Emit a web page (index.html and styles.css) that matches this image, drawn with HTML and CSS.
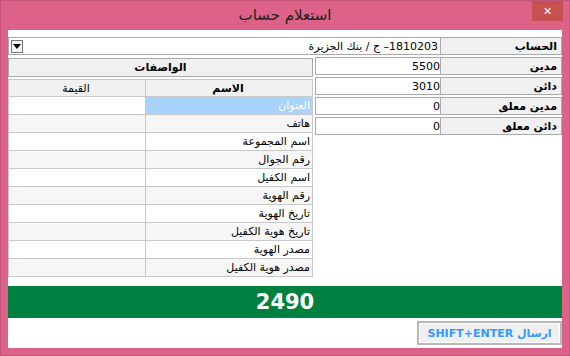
FILE: index.html
```html
<!DOCTYPE html>
<html lang="ar">
<head>
<meta charset="UTF-8">
<title>استعلام حساب</title>
<link rel="stylesheet" href="styles.css">
</head>
<body>
<div class="window">
	<div class="titlebar">
		<div class="title">استعلام حساب</div>
		<div class="close">&#x2715;</div>
	</div>
	<div class="client" dir="rtl">
		<div class="top-row">
			<div class="label">الحساب</div>
			<div class="combo">
				<span class="combo-text">1810203– ج / بنك الجزيرة</span>
				<span class="drop"><svg width="8" height="5" viewBox="0 0 8 5"><path d="M0 0h8L4 5z" fill="#000"/></svg></span>
			</div>
		</div>
		<div class="mid">
			<div class="fields">
				<div class="field"><div class="label">مدين</div><div class="value">5500</div></div>
				<div class="field"><div class="label">دائن</div><div class="value">3010</div></div>
				<div class="field"><div class="label">مدين معلق</div><div class="value">0</div></div>
				<div class="field"><div class="label">دائن معلق</div><div class="value">0</div></div>
			</div>
			<div class="specs">
				<div class="specs-head">الواصفات</div>
				<table class="grid">
					<tr><th class="name-col">الاسم</th><th class="val-col">القيمة</th></tr>
					<tr class="sel"><td class="name">العنوان</td><td></td></tr>
					<tr class="alt"><td class="name">هاتف</td><td></td></tr>
					<tr><td class="name">اسم المجموعة</td><td></td></tr>
					<tr class="alt"><td class="name">رقم الجوال</td><td></td></tr>
					<tr><td class="name">اسم الكفيل</td><td></td></tr>
					<tr class="alt"><td class="name">رقم الهوية</td><td></td></tr>
					<tr><td class="name">تاريخ الهوية</td><td></td></tr>
					<tr class="alt"><td class="name">تاريخ هوية الكفيل</td><td></td></tr>
					<tr><td class="name">مصدر الهوية</td><td></td></tr>
					<tr class="alt"><td class="name">مصدر هوية الكفيل</td><td></td></tr>
				</table>
			</div>
		</div>
		<div class="balance">2490</div>
		<div class="footer">
			<div class="send">ارسال SHIFT+ENTER</div>
		</div>
	</div>
</div>
</body>
</html>
```
FILE: styles.css
```css
* {
	margin: 0;
	padding: 0;
	box-sizing: border-box;
}
body {
	font-family: "DejaVu Sans", "Noto Sans", sans-serif;
	font-size: 11px;
	color: #000;
	background: #dc6288;
}
.window {
	width: 570px;
	height: 356px;
	background: #dc6288;
	border: 1px solid #c4557a;
	display: flex;
	flex-direction: column;
}
.titlebar {
	height: 29px;
	position: relative;
	display: flex;
	justify-content: center;
	align-items: center;
}
.title {
	font-size: 15px;
	color: #222;
	padding-bottom: 1px;
}
.close {
	position: absolute;
	right: 6px;
	top: 0;
	width: 31px;
	height: 20px;
	background: #c75050;
	color: #fff;
	font-size: 11px;
	font-weight: bold;
	display: flex;
	justify-content: center;
	align-items: center;
}
.client {
	margin: 0 7px 0 7px;
	height: 318px;
	background: #fff;
	padding-top: 7px;
	display: flex;
	flex-direction: column;
}
.label {
	background: #f0f0f0;
	border: 1px solid #a9a9a9;
	font-weight: bold;
	padding-right: 4px;
	display: flex;
	align-items: center;
	font-size: 11px;
}
.top-row {
	display: flex;
	height: 18px;
}
.top-row .label {
	width: 122px;
}
.combo {
	flex: 1;
	border: 1px solid #a9a9a9;
	border-right: none;
	display: flex;
	align-items: center;
	justify-content: space-between;
	padding: 0 2px 0 2px;
}
.combo-text {
	font-size: 11px;
}
.drop {
	width: 12px;
	height: 13px;
	border: 1px solid #777;
	background: #f4f4f4;
	display: flex;
	justify-content: center;
	align-items: center;
}
.mid {
	display: flex;
	gap: 2px;
	margin-top: 2px;
}
.fields {
	width: 247px;
	display: flex;
	flex-direction: column;
	gap: 2px;
}
.field {
	display: flex;
	height: 18px;
}
.field .label {
	width: 122px;
}
.value {
	flex: 1;
	border: 1px solid #a9a9a9;
	border-right: none;
	display: flex;
	align-items: center;
	justify-content: flex-end;
	padding-left: 3px;
	direction: ltr;
}
.specs {
	width: 305px;
	padding-top: 1px;
}
.specs-head {
	height: 19px;
	background: #f0f0f0;
	border: 1px solid #a9a9a9;
	font-weight: bold;
	display: flex;
	align-items: center;
	justify-content: center;
}
.grid {
	width: 100%;
	margin-top: 2px;
	border-collapse: collapse;
	table-layout: fixed;
}
.grid th,
.grid td {
	height: 18px;
	border: 1px solid #c8c8c8;
	padding: 0 2px 0 0;
	font-size: 11px;
	font-weight: normal;
	text-align: right;
	white-space: nowrap;
}
.grid th {
	background: #f0f0f0;
	text-align: center;
	height: 17px;
}
.grid th.name-col {
	font-weight: bold;
	width: 167px;
}
.grid tr.alt td {
	background: #f6f6f6;
}
.grid tr.sel td.name {
	background: #aad3fb;
	color: #fff;
}
.balance {
	margin-top: 9px;
	height: 32px;
	background: #008040;
	color: #fff;
	font-size: 21px;
	font-weight: bold;
	display: flex;
	justify-content: center;
	align-items: center;
}
.footer {
	display: flex;
	margin-top: 3px;
}
.send {
	width: 145px;
	height: 24px;
	background: #efefef;
	border: 2px solid #b8b8b8;
	outline: 1px solid #fff;
	outline-offset: -3px;
	color: #3399ff;
	font-weight: bold;
	font-size: 11px;
	display: flex;
	justify-content: center;
	align-items: center;
}
```
